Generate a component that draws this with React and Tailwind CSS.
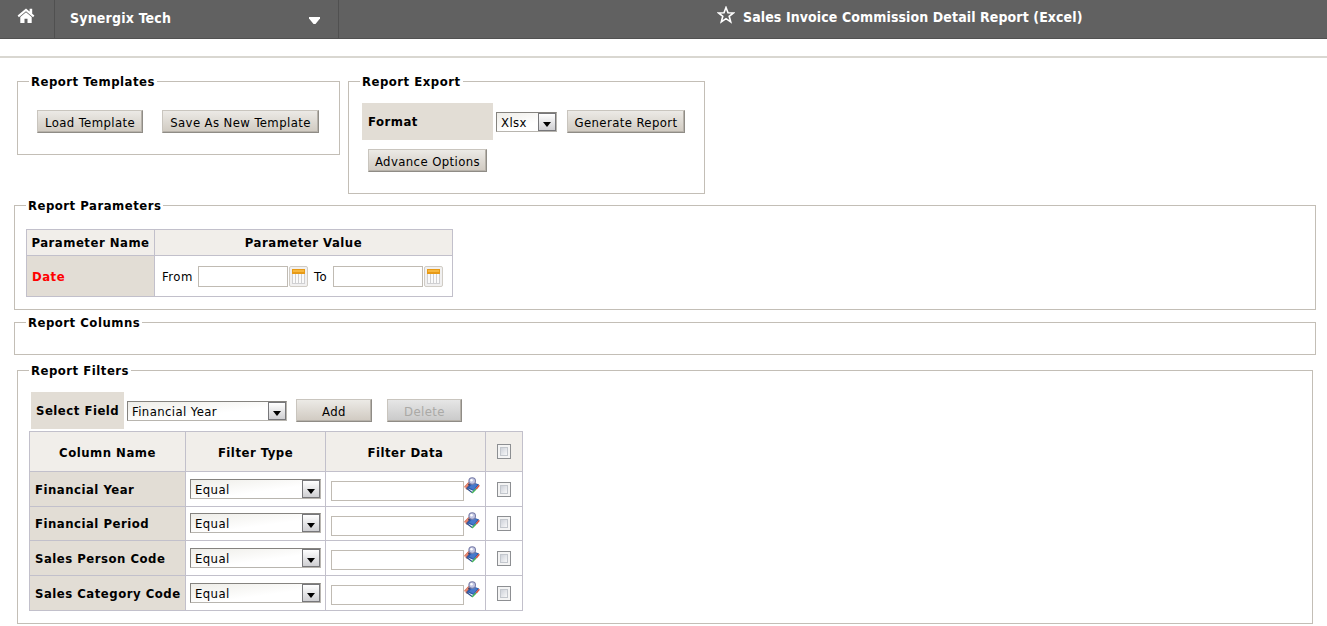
import React, { useState } from 'react';
import clsx from 'clsx';

const FILTERS = [
  { name: 'Financial Year', height: 'h-[35px]' },
  { name: 'Financial Period', height: 'h-[34px]' },
  { name: 'Sales Person Code', height: 'h-[35px]' },
  { name: 'Sales Category Code', height: 'h-[35px]' },
];

const HomeIcon = () => (
  <svg width="18" height="16" viewBox="0 0 18 16" fill="#fff">
    <path d="M9 0.4.6 7.6l1.3 1.6L9 3.2l7.1 6 1.3-1.6-2.2-1.9V.8h-2.6v2.7z" />
    <path d="M9 4.2 3.3 9v6h4.2v-4.2h3V15h4.2V9z" />
  </svg>
);

const StarIcon = () => (
  <svg width="18" height="18" viewBox="0 0 18 18" fill="none" stroke="#fff" strokeWidth="1.6">
    <path d="M9 1.5l2 5.2 5.5.2-4.3 3.4 1.5 5.6L9 12.7l-4.7 3.2 1.5-5.6L1.5 6.9 7 6.7z" />
  </svg>
);

const CalendarIcon = () => (
  <svg width="13" height="15" viewBox="0 0 13 15">
    <rect x="0" y="0" width="13" height="15" fill="#d0d0d2" />
    <path d="M1 5h2v9H1zM4 5h2v9H4zM7 5h2v9H7zM10 5h2v9h-2z" fill="#fafafa" />
    <rect x="0" y="0" width="13" height="5" fill="#e79a17" />
    <rect x="1" y="1" width="11" height="2" fill="#f7b73d" />
  </svg>
);

const LookupIcon = () => (
  <svg width="16" height="17" viewBox="0 0 16 17">
    <path d="M0 9.8 4.5 5l2 1.5L3 13z" fill="#d9694f" />
    <path d="M1.3 10.2 5 6.5M.8 9.6l2 2" stroke="#f4c5b5" strokeWidth=".7" />
    <path d="M2.5 11 8 5l7.2 2.4L9.6 14z" fill="#2d5cab" />
    <path d="M5 10.5 9 6.3l4.5 1.5-4 5z" fill="#4679cc" />
    <path d="M2.5 11.3 8 15.4" fill="none" stroke="#2b4c8c" strokeWidth="1.2" />
    <path d="M8 16 12 12" stroke="#45b35a" strokeWidth="1.6" />
    <path d="M12.2 12 15.3 8.2" stroke="#d8513c" strokeWidth="1.5" />
    <path d="M6.3 6 4.6 8.2" stroke="#3c4166" strokeWidth="1.8" />
    <circle cx="8.2" cy="4" r="3.3" fill="#c3c7e4" stroke="#7a7ea8" strokeWidth="1.1" />
    <circle cx="7.5" cy="3.2" r="1.2" fill="#fff" />
  </svg>
);

const Panel = ({ title, className, children }) => (
  <fieldset className={clsx('min-w-0 border border-[#c3beb6]', className)}>
    <legend className="ml-[11px] h-[17px] px-[2px] font-bold leading-[18px] tracking-[0.5px] whitespace-nowrap">{title}</legend>
    {children}
  </fieldset>
);

const Button = ({ className, disabled, children }) => (
  <button
    disabled={disabled}
    className={clsx(
      'h-[23px] shrink-0 border border-t-[#c9c5be] border-l-[#c9c5be] border-r-[#8f8c86] border-b-[#8f8c86] pt-[2px] tracking-[0.4px] whitespace-nowrap shadow-[inset_-1px_-1px_0_#b7b2aa]',
      disabled
        ? 'bg-linear-to-b from-[#e6e6e6] to-[#c9c9c9] text-[#aaa9a6]'
        : 'bg-linear-to-b from-[#eceae6] to-[#d0cac1]',
      className
    )}
  >
    {children}
  </button>
);

const Dropdown = ({ value, className }) => (
  <button
    className={clsx(
      'flex h-[20px] shrink-0 items-center justify-between border border-t-[#85837f] border-l-[#85837f] border-r-[#b8b5af] border-b-[#b8b5af] bg-linear-to-br from-[#eeede8] to-white to-60% pl-[4px] text-left',
      className
    )}
  >
    <span className="pt-[2px] tracking-[0.4px] whitespace-nowrap">{value}</span>
    <span className="flex h-[18px] w-[18px] items-end justify-center border border-[#77777a] bg-linear-to-b from-white to-[#cfcfd2] pb-[3px]">
      <svg width="8" height="5" viewBox="0 0 8 5"><path d="M0 0h8L4 5z" fill="#000" /></svg>
    </span>
  </button>
);

const TextField = ({ className }) => (
  <input type="text" className={clsx('block shrink-0 border border-[#c0bbb3] bg-white px-1 outline-none', className)} />
);

const DateField = () => (
  <div className="flex">
    <TextField className="h-[21px] w-[90px]" />
    <button className="ml-px flex h-[21px] w-[19px] items-center justify-center rounded-[2px] border border-[#d0ccc5] bg-[#f1f0f0]">
      <CalendarIcon />
    </button>
  </div>
);

const Checkbox = ({ checked, onChange }) => (
  <button
    onClick={onChange}
    className="block h-[15px] w-[14px] border border-[#8d8f92] bg-[#f4f4f4] p-[2px]"
  >
    <span className={clsx('block h-[9px] w-[8px] border border-[#c3c7cd]', checked ? 'bg-[#4b6483]' : 'bg-linear-to-br from-[#cfd3da] to-[#f7f7f8]')} />
  </button>
);

export default function App() {
  const [selected, setSelected] = useState([]);
  const allSelected = selected.length === FILTERS.length;

  const toggle = (name) =>
    setSelected((s) => (s.includes(name) ? s.filter((n) => n !== name) : [...s, name]));

  return (
    <div className="h-[626px] w-[1327px] overflow-hidden bg-white font-['DejaVu_Sans_Condensed','DejaVu_Sans',sans-serif] text-[13px] leading-[16px] text-black">
      {/* Top bar */}
      <header className="flex h-[39px] border-b border-[#515151] bg-[#616161] font-bold text-white">
        <div className="flex w-[55px] justify-center border-r border-[#505050] pt-[8px] pr-[2px]">
          <HomeIcon />
        </div>
        <div className="flex w-[284px] justify-between border-r border-[#505050] pt-[10px] pr-[18px] pl-[15px]">
          <span className="text-[14px] tracking-[0.2px]">Synergix Tech</span>
          <svg className="mt-[7px]" width="11" height="7" viewBox="0 0 11 7"><path d="M0 0h11v1.5L6.5 7h-2L0 1.5z" fill="#fff" /></svg>
        </div>
        <div className="flex pt-[6px] pl-[378px]">
          <StarIcon />
          <h1 className="mt-[3px] ml-[8px] text-[14px] tracking-[0.1px] whitespace-nowrap">Sales Invoice Commission Detail Report (Excel)</h1>
        </div>
      </header>
      <div className="mt-[17px] h-[2px] bg-[#d9d7d1]" />

      <div className="mt-[15px] flex h-[124px] items-start gap-[8px] pl-[17px]">
        <Panel title="Report Templates" className="h-[82px] w-[323px]">
          <div className="flex gap-[19px] pt-[20px] pl-[19px]">
            <Button className="w-[106px]">Load Template</Button>
            <Button className="w-[157px]">Save As New Template</Button>
          </div>
        </Panel>
        <Panel title="Report Export" className="h-[121px] w-[357px]">
          <div className="flex items-center pt-[13px] pl-[13px]">
            <div className="flex h-[37px] w-[131px] items-center bg-[#e2ddd5] pt-px pl-[6px] font-bold tracking-[0.5px]">Format</div>
            <Dropdown value="Xlsx" className="ml-[3px] w-[61px]" />
            <Button className="ml-[10px] w-[118px]">Generate Report</Button>
          </div>
          <Button className="mt-[9px] ml-[19px] w-[119px]">Advance Options</Button>
        </Panel>
      </div>

      <div className="pr-[11px] pl-[14px]">
        <Panel title="Report Parameters" className="h-[113px]">
          <div className="mt-[15px] ml-[11px] grid h-[68px] w-[427px] grid-cols-[127px_297px] grid-rows-[25px_40px] gap-px border border-[#c2c0cb] bg-[#c2c0cb]">
            <div className="flex items-center justify-center bg-[#f1eeea] pt-px font-bold tracking-[0.5px] whitespace-nowrap">Parameter Name</div>
            <div className="flex items-center justify-center bg-[#f1eeea] pt-px font-bold tracking-[0.5px]">Parameter Value</div>
            <div className="flex items-center bg-[#e2ddd5] pt-[2px] pl-[5px] font-bold tracking-[0.5px] text-[#f00]">Date</div>
            <div className="flex items-center bg-white pl-[7px]">
              <span className="w-[36px] pt-[2px] tracking-[0.5px]">From</span>
              <DateField />
              <span className="w-[25px] pt-[2px] pl-[6px] tracking-[0.5px]">To</span>
              <DateField />
            </div>
          </div>
        </Panel>
        <Panel title="Report Columns" className="mt-[4px] h-[41px]" />
      </div>

      <div className="mt-[7px] pr-[14px] pl-[17px]">
        <Panel title="Report Filters" className="h-[262px]">
          <div className="mt-[13px] ml-[13px] flex items-center">
            <div className="flex h-[37px] w-[93px] items-center bg-[#e2ddd5] pt-px pl-[5px] font-bold tracking-[0.5px] whitespace-nowrap">Select Field</div>
            <Dropdown value="Financial Year" className="ml-[3px] w-[160px]" />
            <Button className="ml-[9px] w-[76px]">Add</Button>
            <Button className="ml-[15px] w-[75px]" disabled>Delete</Button>
          </div>

          <div className="mt-[2px] ml-[11px] w-[494px] border-x border-t border-[#c2c0cb]">
            <div className="flex h-[40px] border-b border-[#c2c0cb] bg-[#f1eeea] font-bold tracking-[0.5px]">
              <div className="flex w-[156px] items-center justify-center border-r border-[#c2c0cb] pt-[2px]">Column Name</div>
              <div className="flex w-[140px] items-center justify-center border-r border-[#c2c0cb] pt-[2px]">Filter Type</div>
              <div className="flex w-[160px] items-center justify-center border-r border-[#c2c0cb] pt-[2px]">Filter Data</div>
              <div className="flex flex-1 items-center justify-center">
                <Checkbox checked={allSelected} onChange={() => setSelected(allSelected ? [] : FILTERS.map((f) => f.name))} />
              </div>
            </div>
            {FILTERS.map(({ name, height }) => (
              <div key={name} className={clsx('flex border-b border-[#c2c0cb]', height)}>
                <div className="flex w-[156px] items-center border-r border-[#c2c0cb] bg-[#e2ddd5] pt-px pl-[5px] font-bold tracking-[0.5px] whitespace-nowrap">{name}</div>
                <div className="flex w-[140px] items-center border-r border-[#c2c0cb] pb-px pl-[4px]">
                  <Dropdown value="Equal" className="w-[131px]" />
                </div>
                <div className="flex w-[160px] items-start border-r border-[#c2c0cb] pt-[5px] pl-[5px]">
                  <TextField className="mt-[4px] h-[20px] w-[133px]" />
                  <LookupIcon />
                </div>
                <div className="flex flex-1 items-center justify-center">
                  <Checkbox checked={selected.includes(name)} onChange={() => toggle(name)} />
                </div>
              </div>
            ))}
          </div>
        </Panel>
      </div>
    </div>
  );
}
